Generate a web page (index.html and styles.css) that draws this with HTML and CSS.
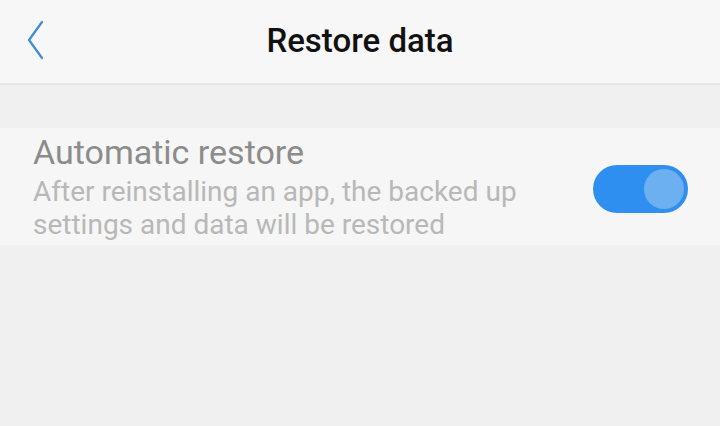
FILE: index.html
```html
<!DOCTYPE html>
<html lang="en">
<head>
    <meta charset="UTF-8">
    <meta name="viewport" content="width=device-width, initial-scale=1.0">
    <title>Restore data</title>
    <link rel="stylesheet" href="styles.css">
</head>
<body>
    <div class="topbar">
        <svg class="back" width="24" height="40" viewBox="0 0 24 40">
            <path d="M17 2 L4 20 L17 38" fill="none" stroke="#3c8fd2" stroke-width="2.2" stroke-linecap="round" stroke-linejoin="round"/>
        </svg>
        <h1>Restore data</h1>
    </div>
    <div class="spacer"></div>
    <div class="setting">
        <div class="text">
            <div class="title">Automatic restore</div>
            <div class="desc">After reinstalling an app, the backed up settings and data will be restored</div>
        </div>
        <div class="toggle"><span class="knob"></span></div>
    </div>
</body>
</html>
```

FILE: styles.css
```css
body {
    margin: 0;
    background-color: #f0f0f0;
    font-family: Roboto, 'Noto Sans', sans-serif;
}
.topbar {
    height: 83px;
    background-color: #f7f7f7;
    border-bottom: 2px solid #e6e6e6;
    display: flex;
    align-items: center;
    justify-content: center;
    position: relative;
    box-sizing: content-box;
}
.back {
    position: absolute;
    left: 25px;
    top: 20px;
}
h1 {
    margin: 0 0 3px;
    font-size: 33px;
    font-weight: 500;
    color: #111;
}
.spacer {
    height: 43px;
}
.setting {
    background-color: #f6f6f6;
    height: 117px;
    display: flex;
    align-items: center;
    padding: 0 32px 0 33px;
    box-sizing: border-box;
}
.text {
    flex: 1;
}
.title {
    font-size: 34px;
    color: #8c8c8c;
    line-height: 38px;
    margin-bottom: 4px;
}
.desc {
    font-size: 28px;
    color: #b8b8b8;
    line-height: 33px;
    width: 520px;
}
.toggle {
    width: 95px;
    height: 48px;
    border-radius: 24px;
    background-color: #2f8ff0;
    display: flex;
    align-items: center;
    justify-content: flex-end;
    padding: 0 4px;
    box-sizing: border-box;
    margin-top: 4px;
}
.knob {
    width: 40px;
    height: 40px;
    border-radius: 50%;
    background-color: #6cb0f2;
}
```
